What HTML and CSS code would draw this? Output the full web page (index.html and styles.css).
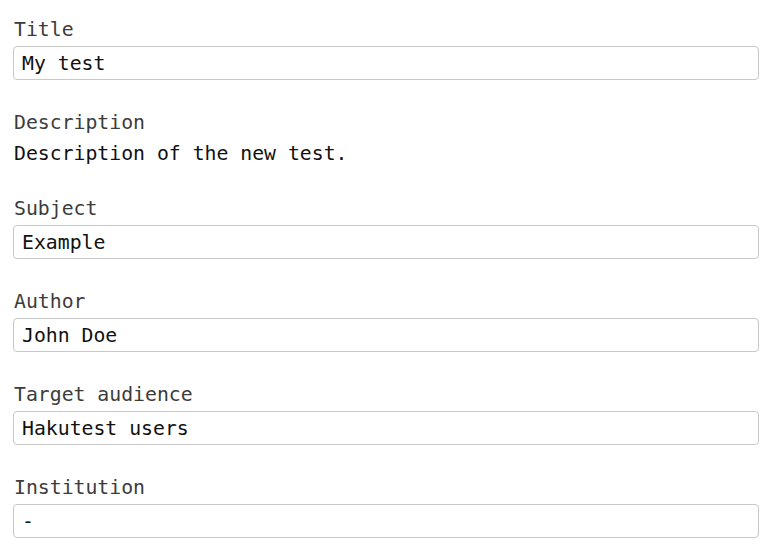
FILE: index.html
```html
<!DOCTYPE html>
<html>
<head>
<meta charset="utf-8">
<link rel="stylesheet" href="styles.css">
</head>
<body>
<form class="form">
  <div class="field">
    <label class="label">Title</label>
    <input class="input" type="text" value="My test">
  </div>
  <div class="field">
    <div class="label">Description</div>
    <div class="desc">Description of the new test.</div>
  </div>
  <div class="field">
    <label class="label">Subject</label>
    <input class="input" type="text" value="Example">
  </div>
  <div class="field">
    <label class="label">Author</label>
    <input class="input" type="text" value="John Doe">
  </div>
  <div class="field">
    <label class="label">Target audience</label>
    <input class="input" type="text" value="Hakutest users">
  </div>
  <div class="field">
    <label class="label">Institution</label>
    <input class="input" type="text" value="-">
  </div>
</form>
</body>
</html>
```
FILE: styles.css
```css
html, body {
  margin: 0;
  padding: 0;
  background: #ffffff;
}
body {
  font-family: "DejaVu Sans Mono", "Liberation Mono", monospace;
  font-size: 19.8px;
  color: #111;
}
.form {
  display: flex;
  flex-direction: column;
  gap: 30px;
  padding: 17px 13px 0 13px;
}
.field {
  display: flex;
  flex-direction: column;
}
.label {
  display: block;
  line-height: 24px;
  height: 24px;
  padding-top: 1px;
  margin: 0 0 4px 1px;
  color: #3c3c3c;
}
.desc {
  line-height: 24px;
  margin: 3px 0 0 1px;
  color: #111;
}
.input {
  box-sizing: border-box;
  height: 34px;
  width: 100%;
  margin: 0;
  padding: 0 8px;
  border: 1px solid #c9c9c9;
  border-radius: 4px;
  font-family: inherit;
  font-size: inherit;
  color: #111;
  background: #fff;
  outline: none;
}
```
